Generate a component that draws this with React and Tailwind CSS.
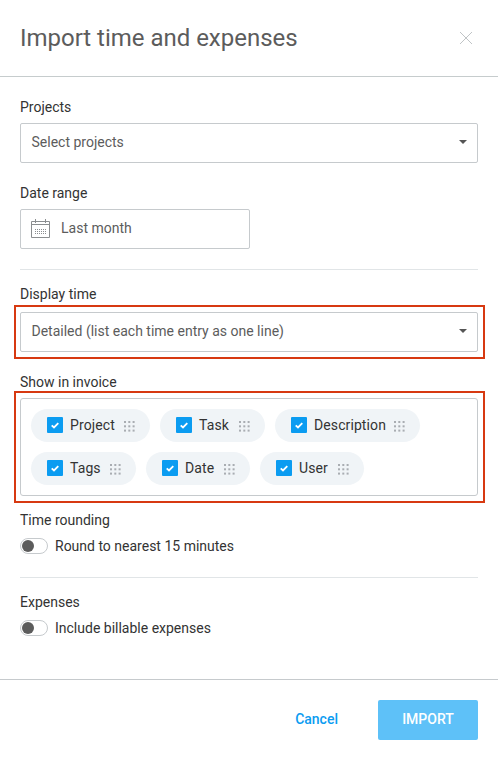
import React, { useState } from 'react';

const initialFields = [
  { name: 'Project', width: 'w-[119px]' },
  { name: 'Task', width: 'w-[105px]' },
  { name: 'Description', width: 'w-[145px]' },
  { name: 'Tags', width: 'w-[105px]' },
  { name: 'Date', width: 'w-[104px]' },
  { name: 'User', width: 'w-[104px]' },
];

function CalendarIcon() {
  return (
    <svg width="19" height="20" viewBox="0 0 19 20" fill="none" stroke="#8a8d8f">
      <path d="M0.5 2.5h18v16h-18zM0.5 5.5h18M4.5 0v4M14.5 0v4" />
      <path d="M4 10.5h11M4 12.5h11M4 14.5h11" strokeDasharray="1 1" />
    </svg>
  );
}

function DragDots() {
  return (
    <svg width="11" height="11" viewBox="0 0 11 11" fill="#a9adb2">
      {[0, 4.3, 8.6].map((y) =>
        [0, 4.3, 8.6].map((x) => <rect key={`${x}-${y}`} x={x} y={y} width="2" height="2" />)
      )}
    </svg>
  );
}

function Caret() {
  return (
    <svg width="8" height="4" viewBox="0 0 8 4" fill="#555">
      <path d="M0 0h8L4 4z" />
    </svg>
  );
}

function Select({ children }) {
  return (
    <button
      type="button"
      className="flex h-10 w-full items-center justify-between rounded-xs border border-[#c6cacd] bg-white pr-[10px] pb-[2px] pl-[10.5px] text-left text-[#5c5c5c]"
    >
      <span>{children}</span>
      <Caret />
    </button>
  );
}

function FieldChip({ name, width, checked, onToggle }) {
  return (
    <div className={`flex h-[33px] items-center rounded-full bg-[#f0f4f7] pl-4 ${width}`}>
      <button
        type="button"
        onClick={onToggle}
        className="mb-px flex size-4 shrink-0 items-center justify-center rounded-[1px] bg-[#0b9cf1]"
      >
        {checked && (
          <svg width="8" height="7" viewBox="0 0 8 7" fill="none" stroke="#fff" strokeWidth="1.8">
            <path d="M0.7 3.3L3 5.5L7.3 1.2" />
          </svg>
        )}
      </button>
      <span className="mb-px ml-[7px] flex-1 tracking-[0.1px]">{name}</span>
      <span className="mt-px mr-[15px]">
        <DragDots />
      </span>
    </div>
  );
}

function Toggle({ label }) {
  const [on, setOn] = useState(false);

  return (
    <button type="button" onClick={() => setOn(!on)} className="flex h-4 items-center">
      <span
        className={`flex h-4 w-7 items-center rounded-full border border-[#c6cacd] bg-white px-px ${on ? 'justify-end' : ''}`}
      >
        <span className="size-3 rounded-full bg-[#5c5c5c]" />
      </span>
      <span className="ml-[7px]">{label}</span>
    </button>
  );
}

function App() {
  const [fields, setFields] = useState(initialFields.map((f) => ({ ...f, checked: true })));

  const toggleField = (name) => {
    setFields(fields.map((f) => (f.name === name ? { ...f, checked: !f.checked } : f)));
  };

  return (
    <div className="flex h-[760px] w-[498px] flex-col bg-white font-[Roboto,sans-serif] text-sm leading-5 text-[#333]">
      {/* Header */}
      <header className="flex h-[77px] items-center justify-between border-b border-[#c6cccd] pr-[26px] pl-5">
        <h1 className="text-2xl tracking-[-0.02px] text-[#5c5c5c]">Import time and expenses</h1>
        <button type="button" aria-label="Close">
          <svg width="12" height="12" viewBox="0 0 12 12" stroke="#c0c4c6" fill="none">
            <path d="M0 0L12 12M12 0L0 12" />
          </svg>
        </button>
      </header>

      {/* Form */}
      <main className="flex-1 px-5 pt-5">
        <div className="mb-[6px]">Projects</div>
        <Select>Select projects</Select>

        <div className="mt-5 mb-[6px]">Date range</div>
        <div className="flex h-10 w-[230px] items-center rounded-xs border border-[#c6cacd] pl-[10px] text-[#5c5c5c]">
          <CalendarIcon />
          <span className="mb-[2px] ml-[11px]">Last month</span>
        </div>

        <hr className="mt-5 border-[#e1e5e7]" />

        <div className="mt-[14px]">Display time</div>
        <div className="mt-px -mr-[7px] -ml-[6px] border-2 border-[#d73911] py-[5px] pr-[5px] pl-1">
          <Select>Detailed (list each time entry as one line)</Select>
        </div>

        <div className="mt-[13px]">Show in invoice</div>
        <div className="-mt-px -mr-[7px] -ml-[6px] border-2 border-[#d73911] py-[5px] pr-[5px] pl-1">
          <div className="flex flex-wrap gap-[10px] rounded-[3px] border border-[#c6cacd] p-[10px]">
            {fields.map((field) => (
              <FieldChip key={field.name} {...field} onToggle={() => toggleField(field.name)} />
            ))}
          </div>
        </div>

        <div className="mt-[7px] mb-2">Time rounding</div>
        <Toggle label="Round to nearest 15 minutes" />

        <hr className="mt-[23px] border-[#e1e5e7]" />

        <div className="mt-[14px] mb-2">Expenses</div>
        <Toggle label="Include billable expenses" />
      </main>

      {/* Footer */}
      <footer className="flex h-[81px] items-center justify-end border-t border-[#c6cacd] pr-5">
        <button type="button" className="mr-10 mb-[2px] font-medium text-[#0b9cf1]">Cancel</button>
        <button type="button" className="h-10 w-[100px] rounded-xs bg-[#5ec1f8] pb-[2px] font-medium text-white">
          IMPORT
        </button>
      </footer>
    </div>
  );
}

export default App;
